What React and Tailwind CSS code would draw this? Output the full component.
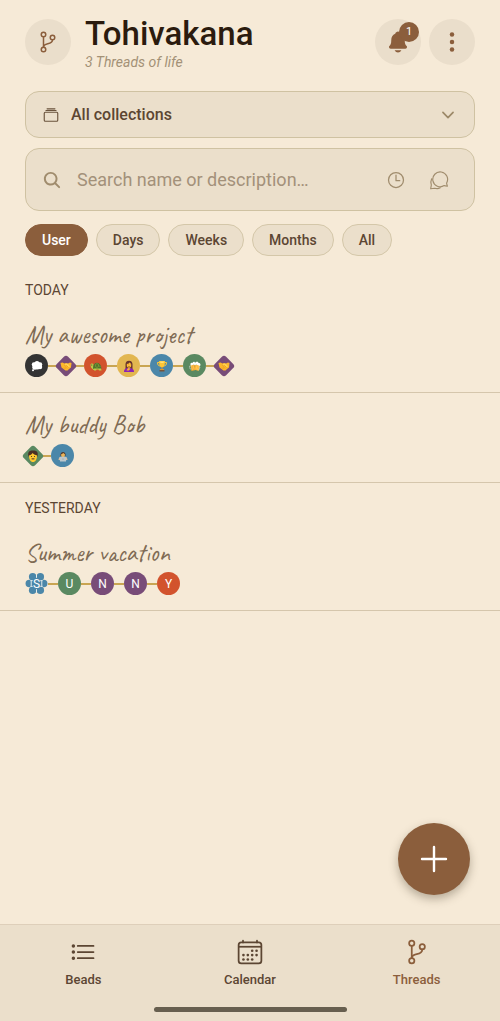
import React, { useState } from "react";
import {
  IoAlbumsOutline,
  IoCalendarOutline,
  IoChevronDown,
  IoEllipsisVertical,
  IoGitBranchOutline,
  IoListOutline,
  IoNotifications,
  IoSearch,
  IoTimeOutline,
} from "react-icons/io5";

function ChatsIcon({ className }) {
  return (
    <svg viewBox="0 0 24 24" fill="none" stroke="currentColor" strokeWidth="1.4" strokeLinecap="round" strokeLinejoin="round" className={className} aria-hidden="true">
      <path d="M22 19.500l-3.800-.8A8.900 8.900 0 1 1 21.200 15.500c-.3 1.200.8 2.500.8 4Z" />
      <path d="M3.200 10.500c-1.200 2.500-1.200 5-.4 7.500L2 22.500l5-.6c2.200.7 4.600.5 6.500-.6" />
    </svg>
  );
}

function Speech() {
  return (
    <g fill="#fff">
      <ellipse cx="12" cy="11.500" rx="9" ry="7.500" />
      <circle cx="6" cy="9" r="4.500" />
      <circle cx="12" cy="7" r="5" />
      <circle cx="18" cy="9" r="4.500" />
      <circle cx="18" cy="14" r="4.500" />
      <circle cx="7" cy="15" r="4.500" />
      <circle cx="4" cy="20.500" r="2" />
    </g>
  );
}

function Handshake() {
  return (
    <g>
      <path d="M1 6l4-1 4 2 3-1 4 1 4-2 3 1-1 9-4 3-3 3-4 0-4-3-4-3z" fill="#fcb72b" />
      <path d="M9 9l3-2 4 1 4 5-2 2-5-4-3 1z" fill="#ffd34f" />
      <path d="M9 9.500l1 3 3-1.500 4 4M8 15l3 3M11 14l3 3" fill="none" stroke="#dc8419" strokeWidth="1" />
    </g>
  );
}

function Turtle() {
  return (
    <g>
      <path d="M1 10c0-4 6-4 6 0v6h4v4H7l-5-5z" fill="#b9cc48" />
      <path d="M6 16c0-14 16-14 17 1l-2 1H7z" fill="#52752d" />
      <path d="M11 9l3-2 3 2v4l-3 2-3-2zM18 11l3 3" stroke="#9aae3b" fill="none" />
      <path d="M8 17h14l1 4h-5l-1-2h-4l-1 2H8z" fill="#b9cc48" />
      <circle cx="3.500" cy="10" r="1" fill="#333" />
    </g>
  );
}

function Woman() {
  return (
    <g>
      <path d="M5 19V8c0-9 14-9 14 0v11z" fill="#68352d" />
      <path d="M2 24c0-7 4-8 10-8s10 2 10 8z" fill="#8b24b5" />
      <ellipse cx="12" cy="10" rx="4.500" ry="5.500" fill="#ffbc35" />
      <path d="M7 8c4 0 6-2 6-4 2 3 3 4 5 4-1-8-10-8-11 0z" fill="#68352d" />
      <path d="M7 21l3-5 5 1-3 4z" fill="#f9b233" />
      <path d="M10 9h.5M14 9h.5M10.500 13h3" stroke="#5b3026" />
    </g>
  );
}

function Trophy() {
  return (
    <g>
      <path d="M7 5H3c0 5 2 7 6 7M17 5h4c0 5-2 7-6 7" fill="none" stroke="#ffc834" strokeWidth="2" />
      <path d="M6 2h12c0 9-2 12-6 13C8 14 6 11 6 2z" fill="#ffc634" />
      <path d="M11 14h2v4h3v3H8v-3h3z" fill="#db962c" />
      <path d="M8 3h8l-1 3H9z" fill="#ffe27a" />
      <path d="M7 20h10v3H7z" fill="#795338" />
    </g>
  );
}

function Beers() {
  return (
    <g>
      <path d="M3 10l8-2 2 12-8 2z" fill="#f6a82c" />
      <path d="M13 8l9 3-3 11-8-3z" fill="#ffb637" />
      <path d="M5 11l2 9M8 10l2 9M16 11l-2 8M19 12l-2 8" stroke="#ffda78" />
      <path d="M4 11c-3-3 0-7 3-5 2-4 5-2 5 0 2-4 7-3 7 0 4-1 5 4 3 6l-8-3-2 2-2-2z" fill="#fff" />
      <path d="M4 12H1l1 6h3M20 14h2l-2 6h-2" stroke="#dfe4df" fill="none" />
    </g>
  );
}

function Man() {
  return (
    <g>
      <path d="M3 13C0 0 9 1 12 1s12-1 9 12z" fill="#4b3125" />
      <path d="M4 11c4-1 6-3 7-5 3 4 6 3 9 5 0 8-3 13-8 13s-8-5-8-13z" fill="#ffc92f" />
      <circle cx="9" cy="13" r="1.100" fill="#443022" />
      <circle cx="15" cy="13" r="1.100" fill="#443022" />
      <path d="M8 18c2-2 6-2 8 0-2 1-6 1-8 0z" fill="#513126" />
    </g>
  );
}

function Technologist() {
  return (
    <g>
      <path d="M7 12C5 1 19 1 17 12z" fill="#503a2c" />
      <path d="M8 9l5-3 3 3c0 7-8 7-8 0z" fill="#e9b35a" />
      <path d="M3 20c0-5 3-7 9-7s9 2 9 7z" fill="#e6bd8e" />
      <path d="M5 14h14l-1 9H6z" fill="#bdc7cb" />
      <circle cx="12" cy="18" r="1.200" fill="#87959c" />
    </g>
  );
}

const glyphs = {
  speech: Speech,
  handshake: Handshake,
  turtle: Turtle,
  woman: Woman,
  trophy: Trophy,
  beers: Beers,
  man: Man,
  technologist: Technologist,
};

const fills = {
  ink: "bg-[#343434]",
  purple: "bg-[#784c78]",
  red: "bg-[#d2532d]",
  yellow: "bg-[#e2b650]",
  blue: "bg-[#4b87a9]",
  green: "bg-[#5a8961]",
};

function Bead({ shape, color, glyph, letter }) {
  const Glyph = glyph ? glyphs[glyph] : null;
  if (shape === "flower") {
    return (
      <span className="grid size-[23px] shrink-0 place-items-center text-[12px] leading-4 text-white">
        <svg viewBox="0 0 24 24" className="col-start-1 row-start-1 size-[23px]" aria-hidden="true">
          <g fill="#4b87a9">
            <circle cx="8" cy="5" r="3.900" />
            <circle cx="16" cy="5" r="3.900" />
            <circle cx="4.500" cy="12" r="3.900" />
            <circle cx="19.500" cy="12" r="3.900" />
            <circle cx="8" cy="19" r="3.900" />
            <circle cx="16" cy="19" r="3.900" />
            <circle cx="12" cy="12" r="6" />
          </g>
          <path d="M12 3v3M12 18v3M6.500 9.500v5M17.500 9.500v5M5.500 9h2.500M16 9h2.500M5.500 15h2.500M16 15h2.500" stroke="#e9f0ee" strokeWidth="1" />
        </svg>
        <span className="col-start-1 row-start-1">{letter}</span>
      </span>
    );
  }
  const content = Glyph ? (
    <svg viewBox="0 0 24 24" className="size-3" aria-hidden="true"><Glyph /></svg>
  ) : letter;
  if (shape === "diamond") {
    return (
      <span className={`grid size-4 shrink-0 rotate-45 place-items-center rounded-[3px] ${fills[color]}`}>
        <span className="-rotate-45">{content}</span>
      </span>
    );
  }
  return (
    <span className={`grid size-[23px] shrink-0 place-items-center rounded-full text-[12px] leading-4 text-white ${fills[color]}`}>
      {content}
    </span>
  );
}

function Thread({ title, beads }) {
  return (
    <li>
      <a href="#thread" className="block border-b border-[#d5c6ac] px-[25px] pt-4 pb-[15px]">
        <h3 className="h-8 truncate font-['Caveat',cursive] text-[25px] leading-8 text-[#7f6b54]">{title}</h3>
        <div className="mt-[3px] flex h-[23px] items-center">
          {beads.map((bead, i) => (
            <React.Fragment key={i}>
              {i > 0 && <span className="h-[2px] w-[10px] shrink-0 bg-[#c9a552]" />}
              <Bead {...bead} />
            </React.Fragment>
          ))}
        </div>
      </a>
    </li>
  );
}

const groups = [
  {
    label: "TODAY",
    threads: [
      {
        title: "My awesome project",
        beads: [
          { color: "ink", glyph: "speech" },
          { shape: "diamond", color: "purple", glyph: "handshake" },
          { color: "red", glyph: "turtle" },
          { color: "yellow", glyph: "woman" },
          { color: "blue", glyph: "trophy" },
          { color: "green", glyph: "beers" },
          { shape: "diamond", color: "purple", glyph: "handshake" },
        ],
      },
      {
        title: "My buddy Bob",
        beads: [
          { shape: "diamond", color: "green", glyph: "man" },
          { color: "blue", glyph: "technologist" },
        ],
      },
    ],
  },
  {
    label: "YESTERDAY",
    threads: [
      {
        title: "Summer vacation",
        beads: [
          { shape: "flower", letter: "S" },
          { color: "green", letter: "U" },
          { color: "purple", letter: "N" },
          { color: "purple", letter: "N" },
          { color: "red", letter: "Y" },
        ],
      },
    ],
  },
];

const tabs = [
  { label: "Beads", Icon: IoListOutline },
  { label: "Calendar", Icon: IoCalendarOutline },
  { label: "Threads", Icon: IoGitBranchOutline },
];

export default function App() {
  const [range, setRange] = useState("User");
  return (
    <div className="flex min-h-screen flex-col bg-[#f6ead7] font-['MiSans','Roboto',sans-serif] text-[#5c4633]">
      <header className="flex items-center px-[25px] pt-[14px]">
        <span className="grid size-[46px] shrink-0 place-items-center rounded-full bg-[#eadecb] text-[#8b5e3c]">
          <IoGitBranchOutline className="size-6" />
        </span>
        <div className="ml-[14px] min-w-0 flex-1">
          <h1 className="text-[33px] leading-10 font-medium text-[#2b1b0e]">Tohivakana</h1>
          <p className="text-[14px] leading-4 text-[#a39176] italic">3 Threads of life</p>
        </div>
        <button type="button" aria-label="Notifications" className="relative grid size-[46px] shrink-0 place-items-center rounded-full bg-[#eadecb] text-[#8b5e3c]">
          <IoNotifications className="size-6" />
          <span className="absolute top-[3px] right-[2px] grid size-5 place-items-center rounded-full bg-[#8b5e3c] text-[11px] text-white">1</span>
        </button>
        <button type="button" aria-label="More options" className="ml-2 grid size-[46px] shrink-0 place-items-center rounded-full bg-[#eadecb] text-[#8b5e3c]">
          <IoEllipsisVertical className="size-6" />
        </button>
      </header>

      <main className="relative flex-1 pt-[21px]">
        <div className="flex flex-col gap-[10px] px-[25px]">
          <div className="grid items-center">
            <select aria-label="Collection" className="col-start-1 row-start-1 h-[47px] w-full appearance-none rounded-[14px] border border-[#cfc2a2] bg-[#ebdfcb] pr-12 pl-[45px] text-[16px] font-medium text-[#5c4633]">
              <option>All collections</option>
            </select>
            <IoAlbumsOutline className="pointer-events-none col-start-1 row-start-1 ml-[17px] size-[18px] text-[#6a533c]" />
            <IoChevronDown className="pointer-events-none col-start-1 row-start-1 mr-[18px] size-[18px] justify-self-end text-[#9c8968]" />
          </div>
          <div className="flex h-[63px] items-center rounded-[14px] border border-[#cfc2a2] bg-[#ebdfcb] pr-[25px] pl-4 text-[#a08c6d]">
            <IoSearch className="size-5 shrink-0" />
            <input type="text" aria-label="Search" placeholder="Search name or description…" className="ml-[15px] min-w-0 flex-1 bg-transparent text-[18px] text-[#5c4633] outline-none placeholder:text-[#a3917a]" />
            <button type="button" aria-label="Recent searches" className="shrink-0">
              <IoTimeOutline className="size-5" />
            </button>
            <button type="button" aria-label="Messages" className="ml-[23px] shrink-0">
              <ChatsIcon className="size-5" />
            </button>
          </div>
        </div>

        <div className="mt-[13px] flex flex-wrap gap-2 px-[25px]">
          {["User", "Days", "Weeks", "Months", "All"].map((name) => (
            <button
              key={name}
              type="button"
              aria-pressed={range === name}
              onClick={() => setRange(name)}
              className={`h-8 rounded-full border px-4 text-[14px] font-medium ${
                range === name ? "border-[#8b5e3c] bg-[#8b5e3c] text-white" : "border-[#d4c7a9] bg-[#ebdfcb]"
              }`}
            >
              {name}
            </button>
          ))}
        </div>

        <div className="mt-[9px]">
          {groups.map((group) => (
            <section key={group.label}>
              <h2 className="px-[25px] pt-[17px] pb-[5px] text-[14px] leading-4">{group.label}</h2>
              <ul>
                {group.threads.map((thread) => (
                  <Thread key={thread.title} {...thread} />
                ))}
              </ul>
            </section>
          ))}
        </div>

        <button type="button" aria-label="New thread" className="absolute right-[30px] bottom-[29px] grid size-[72px] place-items-center rounded-full bg-[#8b5e3c] text-white shadow-[0_4px_10px_rgba(60,50,30,0.35)]">
          <svg viewBox="0 0 32 32" className="size-8" fill="none" stroke="currentColor" strokeWidth="2.400" strokeLinecap="round" aria-hidden="true">
            <path d="M16 4v24M4 16h24" />
          </svg>
        </button>
      </main>

      <nav className="border-t border-[#decfba] bg-[#ebdfcb] pt-[13px] pb-[9px]">
        <div className="grid grid-cols-3">
          {tabs.map(({ label, Icon }) => (
            <a
              key={label}
              href={`#${label.toLowerCase()}`}
              className={`flex flex-col items-center gap-[6px] text-[13px] leading-4 font-medium ${label === "Threads" ? "text-[#8b5e3c]" : ""}`}
            >
              <Icon className="size-7" />
              {label}
            </a>
          ))}
        </div>
        <div className="mx-auto mt-[19px] h-[5px] w-[193px] rounded-full bg-[#675f4f]" />
      </nav>
    </div>
  );
}
